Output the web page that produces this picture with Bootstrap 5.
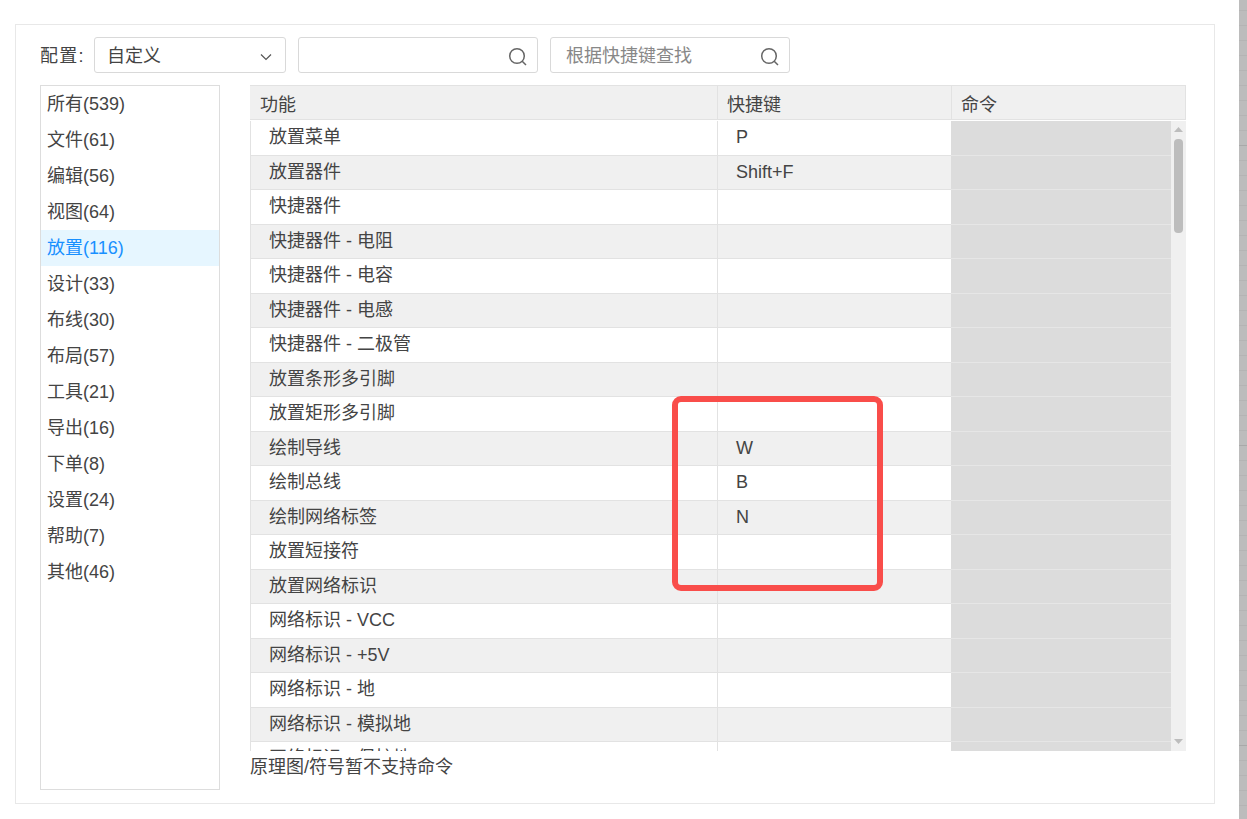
<!DOCTYPE html>
<html lang="zh"><head><meta charset="utf-8">
<link href="https://cdn.jsdelivr.net/npm/bootstrap@5.3.0/dist/css/bootstrap.min.css" rel="stylesheet">
<style>
html,body{height:819px;overflow:hidden;background:#fff}
body{font:18px/1.2 "Liberation Sans","Noto Sans CJK SC",sans-serif;color:#444}
.frame{width:1200px;height:780px;margin:24px 0 0 15px;border:1px solid #e8e8e8;padding:12px 28px 13px 24px;background:#fff}
.strip{position:absolute;left:1239px;top:0;width:8px;height:819px;background-color:#bcbcbc;background-image:linear-gradient(#a9a9a9 1px,transparent 1px),linear-gradient(#b4b4b4 1px,transparent 1px);background-size:100% 300px,100% 15px;background-position:0 145px,0 10px}
.toolbar{height:36px;margin-bottom:12px}
.cfg-label{width:54px;padding-top:4px;letter-spacing:1.2px}
.field{height:36px;border:1px solid #d9d9d9;border-radius:3px;background:#fff;margin-right:12px;padding-top:3px}
.field-sel{width:192px;padding-left:12px;padding-right:13px}
.field-in{width:240px;padding-left:15px;padding-right:9px;color:#888}
.main{height:705px}
.cats{width:180px;border:1px solid #ddd;margin-right:30px;flex:none}
.cat{height:36px;line-height:36px;padding-left:6px}
.cat-on{background:#e6f6ff;color:#1890ff}
.tablewrap{width:936px}
.thead{height:35px;background:#f0f0f0;border:1px solid #e2e2e2;border-width:1px 1px 1px 0}
.thead>div{line-height:33px;padding-top:3px;padding-left:10px}
.thead .c2,.thead .c3{padding-left:9px}
.c1{width:468px;flex:none;border-right:1px solid #e2e2e2}
.c2{width:234px;flex:none;border-right:1px solid #e2e2e2}
.c3{flex:1 1 0}
.tbody{height:630px;margin-top:1px;overflow:hidden}
.rows{width:921px;border-left:1px solid #e2e2e2;overflow:hidden;flex:none}
.trow{height:34.5px;border-bottom:1px solid #e2e2e2;flex:none;line-height:32px}
.trow:first-child{height:34.7px}
.trow:nth-child(even){background:#f0f0f0}
.trow .c1{padding-left:18px;width:467px}
.trow .c2{padding-left:18px}
.trow .c3{background:#dcdcdc;margin:0 0 -1px -1px;position:relative;border-bottom:1px solid #e6e6e6}
.sbar{width:15px;background:#f0f0f0;flex:none;padding:6px 3px 7px}
.arrow{width:9px;height:5px;flex:none}
.thumb{width:9px;height:94px;background:#bdbdbd;border-radius:4px;margin-top:7px}
.note{margin-top:4px;line-height:24px}
.callout{position:absolute;left:672px;top:396px;width:211px;height:195px;border:6px solid #f94d4a;border-radius:9px}
</style></head><body>
<div class="strip"></div>
<div class="frame">
  <div class="toolbar d-flex align-items-center">
    <div class="cfg-label">配置:</div>
    <div class="field field-sel d-flex align-items-center justify-content-between"><span>自定义</span>
      <svg width="12" height="8" viewBox="0 0 12 8"><path d="M1 1.5 6 6.5 11 1.5" fill="none" stroke="#555" stroke-width="1.2"/></svg></div>
    <div class="field field-in d-flex align-items-center justify-content-between"><span></span>
      <svg width="20" height="20" viewBox="0 0 20 20"><circle cx="9" cy="9" r="7.3" fill="none" stroke="#666" stroke-width="1.5"/><path d="M14.2 14.2 18 18" stroke="#666" stroke-width="1.5"/></svg></div>
    <div class="field field-in d-flex align-items-center justify-content-between"><span>根据快捷键查找</span>
      <svg width="20" height="20" viewBox="0 0 20 20"><circle cx="9" cy="9" r="7.3" fill="none" stroke="#666" stroke-width="1.5"/><path d="M14.2 14.2 18 18" stroke="#666" stroke-width="1.5"/></svg></div>
  </div>
  <div class="main d-flex">
    <div class="cats">
      <div class="cat">所有(539)</div><div class="cat">文件(61)</div><div class="cat">编辑(56)</div><div class="cat">视图(64)</div><div class="cat cat-on">放置(116)</div><div class="cat">设计(33)</div><div class="cat">布线(30)</div><div class="cat">布局(57)</div><div class="cat">工具(21)</div><div class="cat">导出(16)</div><div class="cat">下单(8)</div><div class="cat">设置(24)</div><div class="cat">帮助(7)</div><div class="cat">其他(46)</div>
    </div>
    <div class="tablewrap">
      <div class="thead d-flex"><div class="c1">功能</div><div class="c2">快捷键</div><div class="c3">命令</div></div>
      <div class="tbody d-flex">
        <div class="rows d-flex flex-column">
          <div class="trow d-flex"><div class="c1">放置菜单</div><div class="c2">P</div><div class="c3"></div></div>
          <div class="trow d-flex"><div class="c1">放置器件</div><div class="c2">Shift+F</div><div class="c3"></div></div>
          <div class="trow d-flex"><div class="c1">快捷器件</div><div class="c2"></div><div class="c3"></div></div>
          <div class="trow d-flex"><div class="c1">快捷器件 - 电阻</div><div class="c2"></div><div class="c3"></div></div>
          <div class="trow d-flex"><div class="c1">快捷器件 - 电容</div><div class="c2"></div><div class="c3"></div></div>
          <div class="trow d-flex"><div class="c1">快捷器件 - 电感</div><div class="c2"></div><div class="c3"></div></div>
          <div class="trow d-flex"><div class="c1">快捷器件 - 二极管</div><div class="c2"></div><div class="c3"></div></div>
          <div class="trow d-flex"><div class="c1">放置条形多引脚</div><div class="c2"></div><div class="c3"></div></div>
          <div class="trow d-flex"><div class="c1">放置矩形多引脚</div><div class="c2"></div><div class="c3"></div></div>
          <div class="trow d-flex"><div class="c1">绘制导线</div><div class="c2">W</div><div class="c3"></div></div>
          <div class="trow d-flex"><div class="c1">绘制总线</div><div class="c2">B</div><div class="c3"></div></div>
          <div class="trow d-flex"><div class="c1">绘制网络标签</div><div class="c2">N</div><div class="c3"></div></div>
          <div class="trow d-flex"><div class="c1">放置短接符</div><div class="c2"></div><div class="c3"></div></div>
          <div class="trow d-flex"><div class="c1">放置网络标识</div><div class="c2"></div><div class="c3"></div></div>
          <div class="trow d-flex"><div class="c1">网络标识 - VCC</div><div class="c2"></div><div class="c3"></div></div>
          <div class="trow d-flex"><div class="c1">网络标识 - +5V</div><div class="c2"></div><div class="c3"></div></div>
          <div class="trow d-flex"><div class="c1">网络标识 - 地</div><div class="c2"></div><div class="c3"></div></div>
          <div class="trow d-flex"><div class="c1">网络标识 - 模拟地</div><div class="c2"></div><div class="c3"></div></div>
          <div class="trow d-flex"><div class="c1">网络标识 - 保护地</div><div class="c2"></div><div class="c3"></div></div>
        </div>
        <div class="sbar d-flex flex-column align-items-center">
          <svg class="arrow" viewBox="0 0 9 5"><path d="M4.5 0 9 5H0z" fill="#bdbdbd"/></svg>
          <div class="thumb"></div>
          <svg class="arrow mt-auto" viewBox="0 0 9 5"><path d="M0 0H9L4.5 5z" fill="#bdbdbd"/></svg>
        </div>
      </div>
      <div class="note">原理图/符号暂不支持命令</div>
    </div>
  </div>
</div>
<div class="callout"></div>
</body></html>
